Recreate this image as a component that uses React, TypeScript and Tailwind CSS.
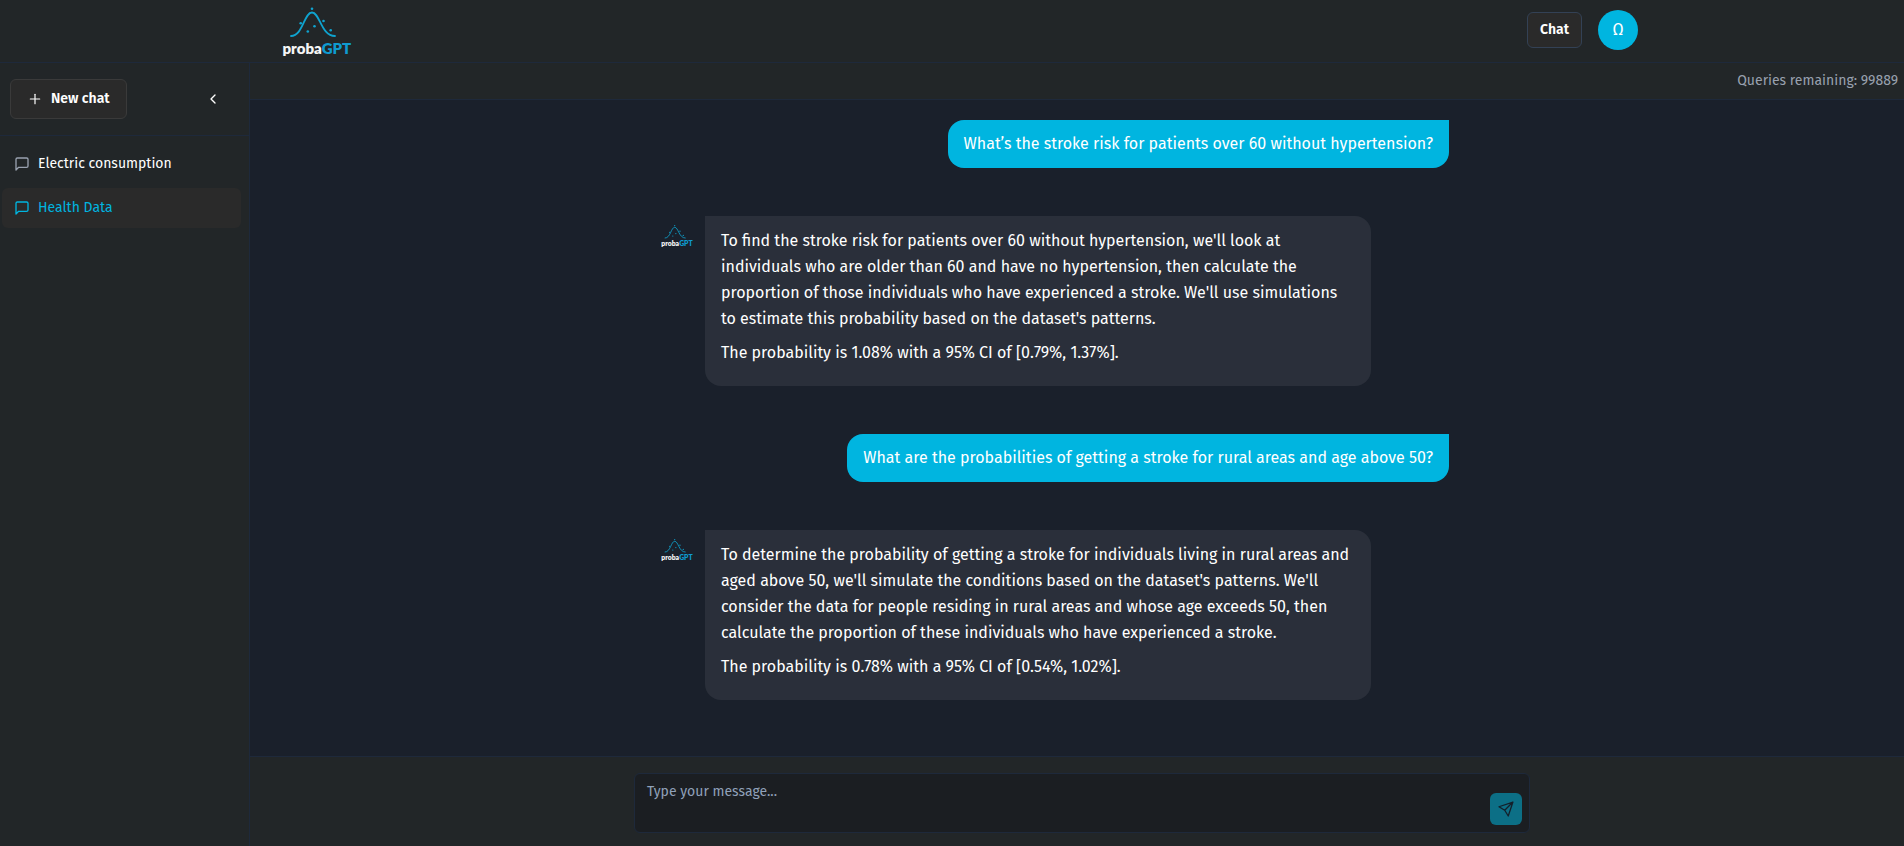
import React, { useState } from 'react';
import { ChevronLeft, Plus } from 'lucide-react';

const chats = [
    { id: 1, name: 'Electric consumption' },
    { id: 2, name: 'Health Data' },
]

const messages = [
    { id: 1, from: 'user', text: ["What’s the stroke risk for patients over 60 without hypertension?"] },
    {
        id: 2, from: 'bot', text: [
            "To find the stroke risk for patients over 60 without hypertension, we'll look at individuals who are older than 60 and have no hypertension, then calculate the proportion of those individuals who have experienced a stroke. We'll use simulations to estimate this probability based on the dataset's patterns.",
            'The probability is 1.08% with a 95% CI of [0.79%, 1.37%].',
        ]
    },
    { id: 3, from: 'user', text: ['What are the probabilities of getting a stroke for rural areas and age above 50?'] },
    {
        id: 4, from: 'bot', text: [
            "To determine the probability of getting a stroke for individuals living in rural areas and aged above 50, we'll simulate the conditions based on the dataset's patterns. We'll consider the data for people residing in rural areas and whose age exceeds 50, then calculate the proportion of these individuals who have experienced a stroke.",
            'The probability is 0.78% with a 95% CI of [0.54%, 1.02%].',
        ]
    },
]

function Logo({ className }: { className: string }) {
    return (
        <svg viewBox="0 0 70 51" className={className} role="img" aria-label="probaGPT">
            <path d="M9 30 C21 30 22 6.5 30 6.5 C38 6.5 39 30 53 30" fill="none" stroke="#0fa3cf" strokeWidth="1.8" strokeLinecap="round" />
            <g fill="#0fa3cf">
                <circle cx="30" cy="2.8" r="1.3" />
                <circle cx="18.7" cy="17.3" r="1.3" />
                <circle cx="41.5" cy="15" r="1.3" />
                <circle cx="32.5" cy="20.3" r="1.3" />
                <circle cx="25.8" cy="25.5" r="1.3" />
                <circle cx="48.7" cy="24.3" r="1.3" />
            </g>
            <text x="0.5" y="47.5" fontFamily="Lato, sans-serif" fontWeight="800" fontSize="15" fill="#f5f5f5">
                proba<tspan fill="#0f9bd0">GPT</tspan>
            </text>
        </svg>
    )
}

function ChatIcon() {
    return (
        <svg viewBox="0 0 24 24" className="size-4 shrink-0" fill="none" stroke="currentColor" strokeWidth="2" strokeLinecap="round" strokeLinejoin="round">
            <path d="M21 15a2 2 0 0 1-2 2H7l-4 4V5a2 2 0 0 1 2-2h14a2 2 0 0 1 2 2z" />
        </svg>
    )
}

function SendIcon() {
    return (
        <svg viewBox="0 0 15 15" className="size-4" fill="none" stroke="currentColor" strokeWidth="1.2" strokeLinejoin="round">
            <path d="M14 1 L0.9 5.4 L6.3 8.7 L9.6 14.1 Z M6.3 8.7 L14 1" />
        </svg>
    )
}

export default function App() {
    const [active, setActive] = useState(2);
    const [message, setMessage] = useState('');

    return (
        <div className="flex flex-col h-screen bg-[#222628] text-white text-base font-['Fira_Sans','Noto_Sans',sans-serif]">
            <header className="border-b border-[#1e293b]">
                <div className="flex items-center justify-between w-full max-w-[1372px] h-[62px] mx-auto pl-4">
                    <a href="#"><Logo className="w-[70px] h-[51px]" /></a>
                    <div className="flex items-center gap-4 pb-0.5">
                        <button className="h-9 px-3 rounded-md border border-[#334155] bg-[#2a2a2a] text-sm font-semibold">Chat</button>
                        <button className="size-10 rounded-full bg-[#00b5e0] text-base">Ω</button>
                    </div>
                </div>
            </header>

            <div className="flex flex-1 min-h-0">
                <aside className="w-[250px] shrink-0 border-r border-[#1e293b]">
                    <div className="flex items-center justify-between pl-2.5 pr-7 py-4 border-b border-[#1e293b]">
                        <button className="flex items-center gap-2 h-10 px-4 rounded-md border border-[#3a3a3a] bg-[#2a2a2a] text-sm font-semibold">
                            <Plus size={16} strokeWidth={1.8} />
                            New chat
                        </button>
                        <button aria-label="Collapse sidebar"><ChevronLeft size={16} /></button>
                    </div>
                    <nav className="flex flex-col gap-1 py-2 pl-0.5 pr-2">
                        {chats.map((c) => (
                            <button
                                key={c.id}
                                onClick={() => setActive(c.id)}
                                className={`flex items-center gap-2 h-10 px-3 rounded-md text-sm ${active === c.id ? 'bg-[#2a2a2a] text-[#00b5e0]' : 'text-gray-400'}`}
                            >
                                <ChatIcon />
                                <span className={active === c.id ? '' : 'text-white'}>{c.name}</span>
                            </button>
                        ))}
                    </nav>
                </aside>

                <main className="flex flex-col flex-1 min-w-0">
                    <div className="flex items-center justify-end h-[37px] px-1.5 border-b border-[#1e293b] text-sm text-gray-400 shrink-0">
                        Queries remaining: 99889
                    </div>

                    <div className="flex-1 min-h-0 overflow-hidden bg-[#1a202b]">
                        <div className="flex flex-col gap-12 w-full max-w-4xl mx-auto pt-5 pl-8 pr-19">
                            {messages.map((m) => m.from === 'user' ? (
                                <div key={m.id} className="self-end px-4 py-3 rounded-2xl rounded-tr-none bg-[#00b5e0] leading-6">
                                    {m.text[0]}
                                </div>
                            ) : (
                                <div key={m.id} className="flex items-start gap-3">
                                    <Logo className="w-8 h-6 mt-2 shrink-0" />
                                    <div className="max-w-[666px] px-4 py-3 rounded-2xl rounded-tl-none bg-[#2a2f3a] leading-[26px]">
                                        {m.text.map((t, i) => <p key={i} className="mb-2">{t}</p>)}
                                    </div>
                                </div>
                            ))}
                        </div>
                    </div>

                    <form className="pt-4 pb-[13px] pl-2.5 border-t border-[#1e293b] shrink-0" onSubmit={(e) => e.preventDefault()}>
                        <div className="flex items-end w-full max-w-4xl mx-auto rounded-md border border-[#1e293b] bg-[#1b1e22]">
                            <textarea
                                aria-label="Message"
                                rows={2}
                                value={message}
                                onChange={(e) => setMessage(e.target.value)}
                                placeholder="Type your message..."
                                className="flex-1 h-[58px] pl-3 pt-1.5 text-sm leading-6 resize-none outline-none placeholder:text-slate-400"
                            />
                            <button aria-label="Send" className="flex items-center justify-center size-8 mr-[7px] mb-[7px] rounded-md bg-[#0c6f86] text-[#14202b]">
                                <SendIcon />
                            </button>
                        </div>
                    </form>
                </main>
            </div>
        </div>
    )
}
